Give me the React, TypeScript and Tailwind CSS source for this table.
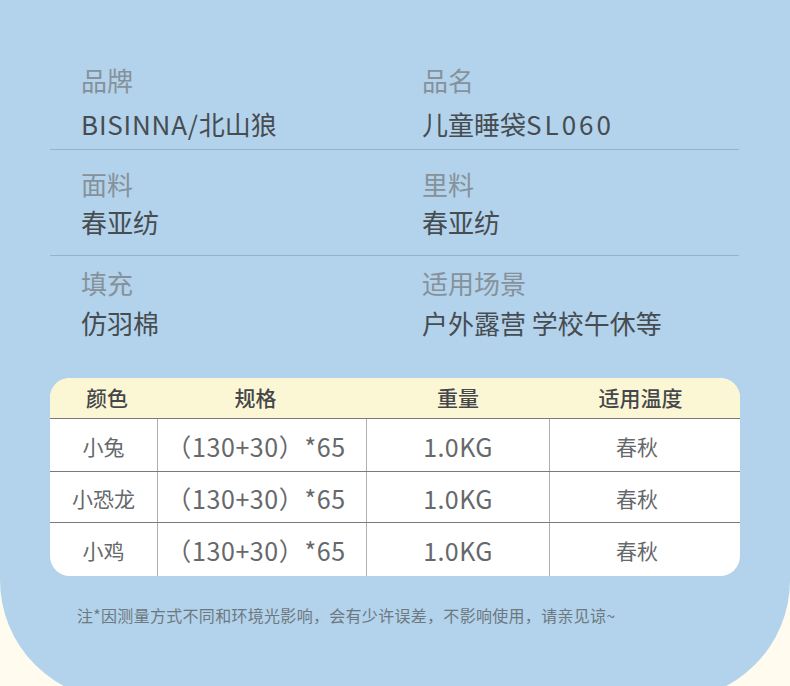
import React from 'react'

const FONT = "font-['Noto_Sans_CJK_SC','Noto_Sans',sans-serif]"

type Part = { t: string; track?: string }

const SPECS: { label: string; value: Part[]; label2: string; value2: Part[] }[] = [
  {
    label: '品牌',
    value: [{ t: 'BISINNA/', track: 'tracking-[0.8px]' }, { t: '北山狼' }],
    label2: '品名',
    value2: [{ t: '儿童睡袋' }, { t: 'SL060', track: 'tracking-[3px]' }],
  },
  { label: '面料', value: [{ t: '春亚纺' }], label2: '里料', value2: [{ t: '春亚纺' }] },
  { label: '填充', value: [{ t: '仿羽棉' }], label2: '适用场景', value2: [{ t: '户外露营 学校午休等' }] },
]

const ROWS = [
  { name: '小兔', h: 'h-[53px]' },
  { name: '小恐龙', h: 'h-[51px]' },
  { name: '小鸡', h: 'h-[53px]' },
]

function SpecCell({ label, value, gap }: { label: string; value: Part[]; gap: string }) {
  return (
    <div className="flex flex-col">
      <div className="text-[26px] leading-none text-[#86919a]">{label}</div>
      <div className={`${gap} text-[26px] leading-none text-[#474c51]`}>
        {value.map((p) => (
          <span key={p.t} className={p.track}>
            {p.t}
          </span>
        ))}
      </div>
    </div>
  )
}

export default function App() {
  return (
    <div className={`${FONT} h-[686px] w-[790px] overflow-hidden bg-[#fffcef]`}>
      <div className="h-[700px] w-full rounded-b-[120px] bg-[#b2d3eb]">
        <div className="ml-[50px] w-[689px]">
          {/* spec list */}
          <div className="grid grid-cols-[341px_1fr] border-b border-[#94b4cc] pb-[12px] pl-[31px] pt-[67px]">
            <SpecCell label={SPECS[0].label} value={SPECS[0].value} gap="mt-[18px]" />
            <SpecCell label={SPECS[0].label2} value={SPECS[0].value2} gap="mt-[18px]" />
          </div>
          <div className="grid grid-cols-[341px_1fr] border-b border-[#94b4cc] pb-[20px] pl-[31px] pt-[21px]">
            <SpecCell label={SPECS[1].label} value={SPECS[1].value} gap="mt-[12px]" />
            <SpecCell label={SPECS[1].label2} value={SPECS[1].value2} gap="mt-[12px]" />
          </div>
          <div className="grid grid-cols-[341px_1fr] pl-[31px] pt-[14px]">
            <SpecCell label={SPECS[2].label} value={SPECS[2].value} gap="mt-[14px]" />
            <SpecCell label={SPECS[2].label2} value={SPECS[2].value2} gap="mt-[14px]" />
          </div>
        </div>

        {/* size table */}
        <div className="ml-[50px] mt-[42px] w-[690px] overflow-hidden rounded-[20px] bg-white">
          <div className="grid h-[41px] grid-cols-[108px_209px_182px_1fr] items-center border-b border-[#7a7a7a] bg-[#fbf7d5] text-[21px] font-medium text-[#45464a]">
            <div className="pl-[6px] text-center">颜色</div>
            <div className="pr-[14px] text-center">规格</div>
            <div className="text-center">重量</div>
            <div className="pr-[8px] text-center">适用温度</div>
          </div>
          {ROWS.map((r, i) => (
            <div
              key={r.name}
              className={`grid ${r.h} grid-cols-[108px_209px_182px_1fr] ${i < ROWS.length - 1 ? 'border-b border-[#7a7a7a]' : ''} text-[#66686b]`}
            >
              <div className="flex items-center justify-center border-r border-[#b0b0b0] pt-[3px] text-[21px]">{r.name}</div>
              <div className="flex items-center justify-center border-r border-[#b0b0b0] pr-[12px] pt-[3px] text-[25px] tracking-[0.6px]">（130+30）*65</div>
              <div className="flex items-center justify-center pt-[3px] text-[25px] tracking-[0.4px]">1.0KG</div>
              <div className="flex items-center justify-center border-l border-[#b0b0b0] pr-[16px] pt-[3px] text-[21px]">春秋</div>
            </div>
          ))}
        </div>

        <div className="ml-[77px] mt-[31px] text-[16px] leading-none tracking-[0.3px] text-[#6e7880]">
          注*因测量方式不同和环境光影响，会有少许误差，不影响使用，请亲见谅~
        </div>
      </div>
    </div>
  )
}
